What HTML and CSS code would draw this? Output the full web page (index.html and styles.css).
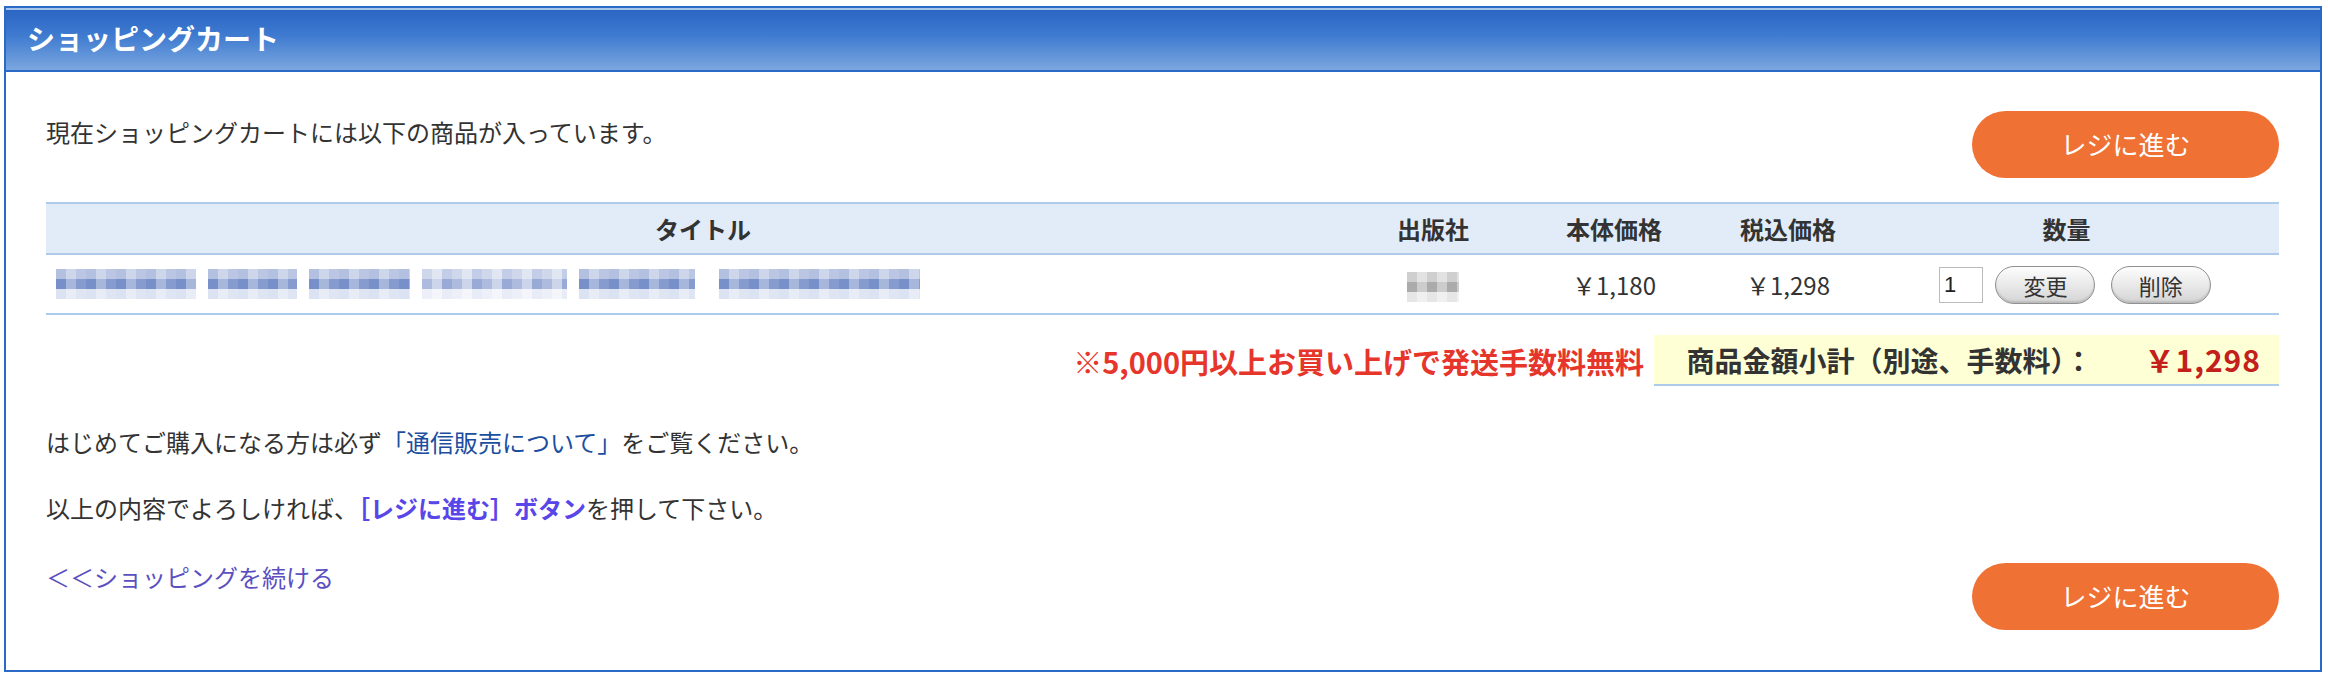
FILE: index.html
```html
<!DOCTYPE html>
<html lang="ja">

<head>
    <meta charset="UTF-8">
    <title>ショッピングカート</title>
    <link rel="stylesheet" href="styles.css">
</head>

<body>
    <div class="cart">
        <h2 class="cart-title">ショッピングカート</h2>
        <div class="cart-body">
            <div class="top-row">
                <p class="lead">現在ショッピングカートには以下の商品が入っています。</p>
                <a class="btn-register" href="#">レジに進む</a>
            </div>

            <table class="cart-table">
                <colgroup>
                    <col class="c-title">
                    <col class="c-pub">
                    <col class="c-price">
                    <col class="c-tax">
                    <col class="c-qty">
                </colgroup>
                <tr>
                    <th>タイトル</th>
                    <th>出版社</th>
                    <th>本体価格</th>
                    <th>税込価格</th>
                    <th>数量</th>
                </tr>
                <tr>
                    <td class="title-cell">
                        <div class="blur-title">
                            <span class="mosaic w140"></span>
                            <span class="mosaic w89"></span>
                            <span class="mosaic w101"></span>
                            <span class="mosaic w145 light"></span>
                            <span class="mosaic w116"></span>
                            <span class="mosaic w201 gap"></span>
                        </div>
                    </td>
                    <td><span class="mosaic-gray"></span></td>
                    <td>￥1,180</td>
                    <td>￥1,298</td>
                    <td class="qty-cell">
                        <input class="qty-input" type="text" value="1">
                        <button class="btn-small">変更</button>
                        <button class="btn-small del">削除</button>
                    </td>
                </tr>
            </table>

            <div class="summary-row">
                <p class="notice">※5,000円以上お買い上げで発送手数料無料</p>
                <div class="subtotal">商品金額小計（別途、手数料）：<span class="subtotal-price">￥1,298</span></div>
            </div>

            <p class="guide first">はじめてご購入になる方は必ず<a class="guide-link" href="#">「通信販売について」</a>をご覧ください。</p>
            <p class="guide">以上の内容でよろしければ、<strong class="guide-strong">［レジに進む］ボタン</strong>を押して下さい。</p>

            <div class="bottom-row">
                <a class="back-link" href="#">＜＜ショッピングを続ける</a>
                <a class="btn-register low" href="#">レジに進む</a>
            </div>
        </div>
    </div>
</body>

</html>
```

FILE: styles.css
```css
* {
    margin: 0;
    padding: 0;
    box-sizing: border-box;
}

body {
    font-family: "Noto Sans CJK JP", sans-serif;
    color: #333;
    background: #fff;
    font-size: 24px;
}

.cart {
    margin: 6px 6px 0 4px;
    border: 2px solid #2b69c6;
    height: 666px;
}

.cart-title {
    height: 64px;
    padding-left: 21px;
    line-height: 60px;
    font-size: 28px;
    font-weight: bold;
    color: #fff;
    background: linear-gradient(#a9c5ec 0, #a9c5ec 2px, #2a66c3 2px, #3f7bd0 45%, #7ba7df 100%);
    border-bottom: 2px solid #2b69c6;
}

.cart-body {
    padding: 39px 41px 0 40px;
}

.top-row,
.bottom-row {
    display: flex;
    justify-content: space-between;
    align-items: flex-start;
}

.lead {
    padding-top: 3px;
    line-height: 36px;
}

.btn-register {
    display: block;
    width: 307px;
    height: 67px;
    line-height: 66px;
    border-radius: 34px;
    background-color: #ef7134;
    color: #fff;
    font-size: 26px;
    text-align: center;
    text-decoration: none;
}

.btn-register.low {
    margin-top: 4px;
}

/* 商品テーブル */
.cart-table {
    width: 100%;
    margin-top: 24px;
    border-collapse: collapse;
    table-layout: fixed;
}

.c-title { width: 1314px; }
.c-pub { width: 146px; }
.c-price { width: 216px; }
.c-tax { width: 132px; }
.c-qty { width: 425px; }

.cart-table th {
    height: 51px;
    background-color: #e1ecf8;
    border-top: 2px solid #aecbea;
    border-bottom: 2px solid #aecbea;
    font-weight: bold;
    text-align: center;
}

.cart-table td {
    height: 60px;
    border-bottom: 2px solid #aecbea;
    text-align: center;
    white-space: nowrap;
}

.title-cell {
    padding-left: 10px;
}

.blur-title {
    display: flex;
    gap: 12px;
}

.mosaic {
    display: block;
    height: 30px;
    background:
        repeating-linear-gradient(90deg, rgba(255, 255, 255, 0) 0 10px, rgba(255, 255, 255, .35) 10px 20px, rgba(255, 255, 255, .1) 20px 30px),
        linear-gradient(#b3c0e0 0, #b3c0e0 10px, #7890c9 10px, #7890c9 20px, #dbe2f1 20px);
}

.mosaic.light {
    background:
        repeating-linear-gradient(90deg, rgba(255, 255, 255, .2) 0 10px, rgba(255, 255, 255, .5) 10px 20px, rgba(255, 255, 255, 0) 20px 30px),
        linear-gradient(#c3cde7 0, #c3cde7 10px, #9aaad6 10px, #9aaad6 20px, #e8ecf6 20px);
}

.mosaic.gap { margin-left: 12px; }
.w140 { width: 140px; }
.w89 { width: 89px; }
.w101 { width: 101px; }
.w145 { width: 145px; }
.w116 { width: 116px; }
.w201 { width: 201px; }

.mosaic-gray {
    display: inline-block;
    width: 52px;
    height: 30px;
    vertical-align: middle;
    background:
        repeating-linear-gradient(90deg, rgba(255, 255, 255, 0) 0 10px, rgba(255, 255, 255, .4) 10px 20px),
        linear-gradient(#cfcfcf 0, #cfcfcf 10px, #ababab 10px, #ababab 20px, #e6e6e6 20px);
}

.qty-cell {
    padding-left: 85px;
    text-align: left !important;
}

.qty-input {
    width: 44px;
    height: 36px;
    padding-left: 4px;
    border: 1px solid #bbb;
    font-family: "Liberation Sans", sans-serif;
    font-size: 22px;
    color: #222;
    vertical-align: middle;
}

.btn-small {
    width: 100px;
    height: 38px;
    margin-left: 7px;
    border: 1px solid #909090;
    border-radius: 19px;
    background: linear-gradient(#fdfdfd, #e9e9e9 50%, #d4d4d4);
    box-shadow: inset 0 -2px 2px rgba(0, 0, 0, .12);
    font-family: "Noto Sans CJK JP", sans-serif;
    font-size: 22px;
    color: #333;
    vertical-align: middle;
}

.btn-small.del {
    margin-left: 10px;
}

/* 小計 */
.summary-row {
    display: flex;
    justify-content: flex-end;
    align-items: center;
    margin-top: 20px;
}

.notice {
    margin-right: 10px;
    color: #e6352b;
    font-size: 29px;
    font-weight: bold;
}

.subtotal {
    width: 625px;
    height: 51px;
    padding-right: 18px;
    line-height: 49px;
    text-align: right;
    background-color: #ffffd6;
    border-bottom: 2px solid #aecbea;
    font-size: 28px;
    font-weight: bold;
}

.subtotal-price {
    margin-left: 52px;
    font-size: 30px;
    letter-spacing: 1px;
    color: #c4201b;
}

.guide {
    margin-top: 30px;
    line-height: 36px;
}

.guide.first {
    margin-top: 38px;
}

.guide-link {
    color: #1c4ea0;
    text-decoration: none;
}

.guide-strong {
    color: #5846e8;
}

.bottom-row {
    margin-top: 33px;
}

.back-link {
    line-height: 36px;
    color: #5b4fc1;
    text-decoration: none;
}
```
